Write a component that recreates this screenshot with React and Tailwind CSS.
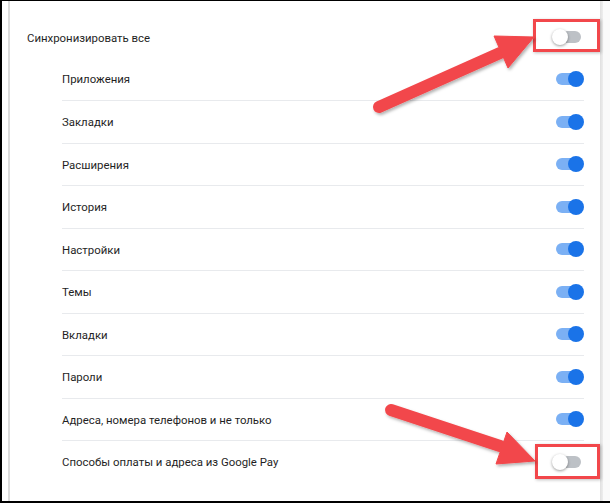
import React from "react";

function Toggle({ on }) {
  return (
    <div className="relative w-[32px] h-[16px] shrink-0">
      <div
        className={
          "absolute left-[4px] top-[2px] w-[25px] h-[12px] rounded-full " +
          (on ? "bg-[#7bb0f4]" : "bg-[#bdc1c6]")
        }
      />
      {on ? (
        <div className="absolute right-0 top-0 w-[16px] h-[16px] rounded-full bg-[#1a73e8]" />
      ) : (
        <div className="absolute left-0 top-0 w-[16px] h-[16px] rounded-full bg-white shadow-[0_1px_3px_rgba(0,0,0,0.4)]" />
      )}
    </div>
  );
}

const items = [
  ["Приложения", true],
  ["Закладки", true],
  ["Расширения", true],
  ["История", true],
  ["Настройки", true],
  ["Темы", true],
  ["Вкладки", true],
  ["Пароли", true],
  ["Адреса, номера телефонов и не только", true],
  ["Способы оплаты и адреса из Google Pay", false],
];

export default function App() {
  return (
    <div
      className="relative w-[610px] h-[503px] bg-white border-t border-l-2 border-b-2 border-black overflow-hidden text-[11.4px] text-[#1f1f1f]"
      style={{ fontFamily: "Roboto, 'Liberation Sans', sans-serif" }}
    >
      <div className="flex h-full">
        <div className="w-[6px] shrink-0" />
        <div className="w-[2px] shrink-0 bg-[#dcdcdc]" />
        <div className="w-[590px] shrink-0 flex flex-col">
          <div className="h-[56.5px] box-border pt-[16px] pl-[17px] pr-[16px] flex items-center justify-between">
            <span className="pt-[2px]">Синхронизировать все</span>
            <Toggle on={false} />
          </div>
          <div className="pl-[52px] pr-[16px]">
            {items.map(([label, on], i) => (
              <div
                key={label}
                className={
                  "h-[42.5px] box-border flex items-center justify-between " +
                  (i > 0 ? "border-t border-[#e8eaed]" : "")
                }
              >
                <span className="pt-[2px]">{label}</span>
                <Toggle on={on} />
              </div>
            ))}
          </div>
        </div>
        <div className="w-[3px] shrink-0 bg-gradient-to-r from-[#e0e0e0] to-[#eeeeee]" />
        <div className="flex-1 bg-[#fafafa]" />
      </div>

      <div className="absolute left-[531px] top-[18px] w-[67px] h-[33px] border-[3px] border-[#f2474b] shadow-[1px_1px_3px_rgba(0,0,0,0.25)]" />
      <div className="absolute left-[533px] top-[443px] w-[65px] h-[35px] border-[3px] border-[#f2474b] shadow-[1px_1px_3px_rgba(0,0,0,0.25)]" />

      <svg
        className="absolute left-[-2px] top-[-1px]"
        width="610"
        height="503"
        viewBox="0 0 610 503"
      >
        <defs>
          <filter id="sh" x="-10%" y="-10%" width="130%" height="130%">
            <feDropShadow dx="1.5" dy="2" stdDeviation="1.5" floodColor="#000" floodOpacity="0.3" />
          </filter>
        </defs>
        <g filter="url(#sh)" fill="#f2474b" stroke="#f2474b">
          <line x1="379" y1="107" x2="500" y2="53" strokeWidth="12" strokeLinecap="round" />
          <polygon points="494,36 534,37 508,68" strokeWidth="1" strokeLinejoin="round" />
          <line x1="391" y1="410" x2="500" y2="446" strokeWidth="12" strokeLinecap="round" />
          <polygon points="507,432 535,461 496,464" strokeWidth="1" strokeLinejoin="round" />
        </g>
      </svg>
    </div>
  );
}
